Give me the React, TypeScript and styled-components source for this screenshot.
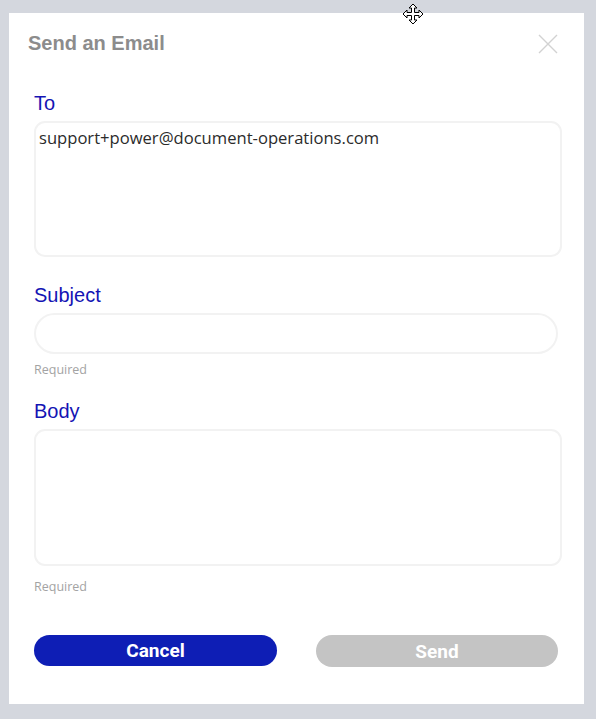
import styled, { createGlobalStyle } from 'styled-components';

const GlobalStyle = createGlobalStyle`
  html, body {
    margin: 0;
    padding: 0;
    background: #d4d7de;
  }
  * {
    box-sizing: border-box;
  }
`;

const Page = styled.div`
  width: 596px;
  height: 719px;
  padding: 13px 12px 15px 9px;
  position: relative;
`;

const Dialog = styled.section`
  background: #ffffff;
  height: 691px;
  width: 575px;
  padding: 18px 22px 0 25px;
  display: flex;
  flex-direction: column;
`;

const Header = styled.header`
  display: flex;
  justify-content: space-between;
  align-items: center;
  margin-left: -6px;
  height: 24px;
`;

const Title = styled.h2`
  margin: 0;
  font-family: 'Liberation Sans', Arial, sans-serif;
  font-weight: bold;
  font-size: 20px;
  color: #8c8c8c;
`;

const CloseButton = styled.button`
  border: none;
  background: none;
  padding: 0;
  width: 20px;
  height: 20px;
  margin-right: 4px;
  margin-top: 1px;
  display: flex;
  align-items: center;
  justify-content: center;
  cursor: pointer;
`;

const Field = styled.div<{ $top: number }>`
  margin-top: ${(p) => p.$top}px;
  display: flex;
  flex-direction: column;
`;

const Label = styled.label`
  font-family: 'Liberation Sans', Arial, sans-serif;
  font-size: 20px;
  color: #1414b4;
  line-height: 22px;
  margin-bottom: 7px;
`;

const Area = styled.div<{ $height: number }>`
  width: 528px;
  height: ${(p) => p.$height}px;
  border: 2px solid #f2f2f2;
  border-radius: 11px;
  padding: 4px 3px;
  font-family: 'Open Sans', 'Noto Sans', sans-serif;
  font-size: 16.6px;
  color: #2b2b2b;
  line-height: 22px;
`;

const Input = styled.div`
  width: 524px;
  height: 41px;
  border: 2px solid #f2f2f2;
  border-radius: 21px;
`;

const Hint = styled.span<{ $gap: number }>`
  font-family: 'Open Sans', 'Noto Sans', sans-serif;
  font-size: 12.5px;
  color: #a3a3a3;
  margin-top: ${(p) => p.$gap}px;
  line-height: 16px;
`;

const Actions = styled.div`
  display: flex;
  justify-content: space-between;
  margin-top: 40px;
  padding-right: 4px;
`;

const Button = styled.button<{ $primary?: boolean }>`
  width: ${(p) => (p.$primary ? 243 : 242)}px;
  height: ${(p) => (p.$primary ? 31 : 32)}px;
  border: none;
  border-radius: 16px;
  background: ${(p) => (p.$primary ? '#0e1eb5' : '#c4c4c4')};
  color: #ffffff;
  font-family: Roboto, 'Liberation Sans', sans-serif;
  font-weight: bold;
  font-size: 19px;
  padding: 0;
  cursor: pointer;
`;

const MoveCursor = styled.svg`
  position: absolute;
  left: 402px;
  top: 3px;
`;

export default function App() {
  return (
    <>
      <GlobalStyle />
      <Page>
        <Dialog>
          <Header>
            <Title>Send an Email</Title>
            <CloseButton aria-label="Close">
              <svg width="20" height="20" viewBox="0 0 20 20">
                <path d="M1 1 L19 19 M19 1 L1 19" stroke="#d2d2d2" strokeWidth="1.4" />
              </svg>
            </CloseButton>
          </Header>
          <Field $top={37}>
            <Label>To</Label>
            <Area $height={136}>support+power@document-operations.com</Area>
          </Field>
          <Field $top={27}>
            <Label>Subject</Label>
            <Input />
            <Hint $gap={8}>Required</Hint>
          </Field>
          <Field $top={22}>
            <Label>Body</Label>
            <Area $height={137} />
            <Hint $gap={13}>Required</Hint>
          </Field>
          <Actions>
            <Button $primary>Cancel</Button>
            <Button>Send</Button>
          </Actions>
        </Dialog>
        <MoveCursor width="22" height="23" viewBox="0 0 22 23">
          <path
            d="M11 1 L15 5 L12.5 5 L12.5 9.5 L17 9.5 L17 7 L21 11 L17 15 L17 12.5 L12.5 12.5 L12.5 17 L15 17 L11 21 L7 17 L9.5 17 L9.5 12.5 L5 12.5 L5 15 L1 11 L5 7 L5 9.5 L9.5 9.5 L9.5 5 L7 5 Z"
            fill="#ffffff"
            stroke="#000000"
            strokeWidth="1"
          />
        </MoveCursor>
      </Page>
    </>
  );
}
